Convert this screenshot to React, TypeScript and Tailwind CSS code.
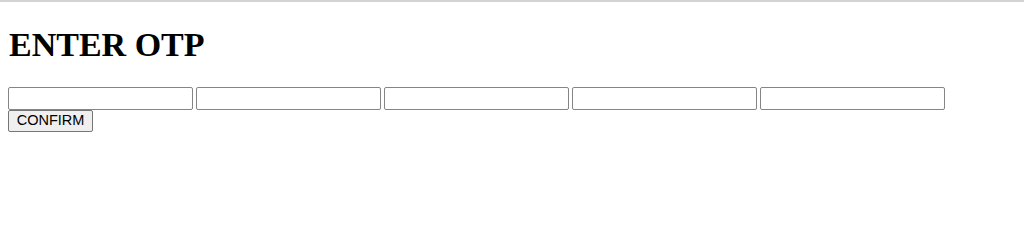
import React from "react";

export default function App() {
  const boxes = [0, 1, 2, 3, 4];

  return (
    <div className="h-[223px] w-[1024px] bg-white overflow-hidden">
      {/* browser edge line */}
      <div className="h-[2px] bg-[#d3d3d3]" />

      <div className="px-2">
        <h1 className="mt-[26px] pl-[1px] font-['Liberation_Serif',serif] text-[34px] leading-[34px] font-bold text-black">
          ENTER OTP
        </h1>

        <div className="mt-[25px] flex gap-[3px]">
          {boxes.map((i) => (
            <input
              key={i}
              type="text"
              className="h-[23px] w-[185px] rounded-[2px] border border-[#858585] bg-white px-1 outline-none"
            />
          ))}
        </div>

        <button className="mt-0 flex h-[22px] w-[85px] items-center justify-center rounded-[2px] border border-[#767676] bg-[#efefef] font-['Liberation_Sans',Arial,sans-serif] text-[14.5px] text-black">
          CONFIRM
        </button>
      </div>
    </div>
  );
}
